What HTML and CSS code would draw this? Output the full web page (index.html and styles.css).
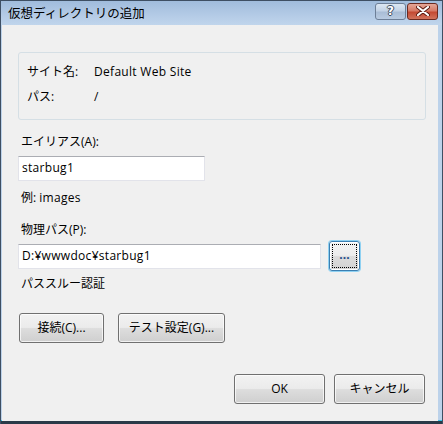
FILE: index.html
```html
<!DOCTYPE html>
<html lang="ja">
<head>
  <meta charset="UTF-8">
  <title>仮想ディレクトリの追加</title>
  <link rel="stylesheet" href="styles.css">
</head>
<body>
  <div class="window">
    <div class="titlebar">
      <span class="title">仮想ディレクトリの追加</span>
      <div class="caption-buttons">
        <div class="cap-btn help"><span>?</span></div>
        <div class="cap-btn close">
          <svg width="14" height="10" viewBox="0 0 14 10">
            <path d="M2 1 L12 9 M12 1 L2 9" stroke="#5a1a10" stroke-width="4" stroke-linecap="round"/>
            <path d="M2 1 L12 9 M12 1 L2 9" stroke="#ffffff" stroke-width="2.2" stroke-linecap="round"/>
          </svg>
        </div>
      </div>
    </div>

    <div class="client">
      <div class="group">
        <div class="info-row"><span class="info-label">サイト名:</span><span class="latin">Default Web Site</span></div>
        <div class="info-row"><span class="info-label">パス:</span><span>/</span></div>
      </div>

      <div class="label alias-label">エイリアス(A):</div>
      <div class="textbox alias-box latin">starbug1</div>
      <div class="label example">例: <span class="latin">images</span></div>

      <div class="label path-label">物理パス(P):</div>
      <div class="path-row">
        <div class="textbox path-box latin">D:¥wwwdoc¥starbug1</div>
        <div class="btn browse"><span class="focus-ring">...</span></div>
      </div>

      <div class="label passthru">パススルー認証</div>

      <div class="btn-row">
        <div class="btn connect">接続(C)...</div>
        <div class="btn test">テスト設定(G)...</div>
      </div>

      <div class="footer">
        <div class="btn ok">OK</div>
        <div class="btn cancel">キャンセル</div>
      </div>
    </div>
  </div>
</body>
</html>
```

FILE: styles.css
```css
html, body {
  margin: 0;
  padding: 0;
}

body {
  font-family: 'Open Sans', 'Noto Sans CJK JP', sans-serif;
  font-size: 12px;
  color: #000;
  background: #fff;
}

.latin {
  letter-spacing: 0.3px;
}

.window {
  width: 443px;
  height: 424px;
  box-sizing: border-box;
  border: 1px solid #3e4f63;
  border-bottom: none;
  background: #bcd2ea;
  display: flex;
  flex-direction: column;
  box-shadow: inset 0 -3px 0 #2a3a48, inset 0 -4px 0 #38c0e4;
}

.titlebar {
  height: 24px;
  flex-shrink: 0;
  display: flex;
  align-items: center;
  justify-content: space-between;
  background: linear-gradient(to bottom, #a0bcdc 0%, #b4cbe6 60%, #c0d5ec 100%);
}

.title {
  margin-left: 7px;
  margin-top: -1px;
  font-size: 12.5px;
  color: #000;
}

.caption-buttons {
  display: flex;
  gap: 1px;
  margin-right: 4px;
  margin-top: -4px;
}

.cap-btn {
  width: 31px;
  height: 17px;
  box-sizing: border-box;
  border: 1px solid #6d7f97;
  border-radius: 3px;
  display: flex;
  align-items: center;
  justify-content: center;
}

.help {
  background: linear-gradient(to bottom, #dce7f3 0%, #c3d3e6 45%, #a9bdd6 55%, #b9cbe1 100%);
}

.help span {
  font-family: 'DejaVu Sans', sans-serif;
  font-weight: bold;
  font-size: 12px;
  color: #fff;
  text-shadow: -1px 0 #3c4c60, 1px 0 #3c4c60, 0 -1px #3c4c60, 0 1px #3c4c60;
  line-height: 1;
}

.close {
  border-color: #6b2a20;
  background: linear-gradient(to bottom, #e5a798 0%, #d67a66 45%, #c44a33 55%, #d1735c 100%);
}

.client {
  flex: 1;
  margin: 0 4px 3px 1px;
  background: #f0f0f0;
  padding: 27px 0 0 16px;
  display: flex;
  flex-direction: column;
  align-items: flex-start;
}

.group {
  width: 408px;
  height: 68px;
  box-sizing: border-box;
  border: 1px solid #d5dfe5;
  border-radius: 3px;
  padding: 11px 0 0 8px;
  display: flex;
  flex-direction: column;
  gap: 9px;
}

.info-row {
  display: flex;
  line-height: 16px;
}

.info-label {
  width: 67px;
}

.label {
  line-height: 16px;
  margin-left: 3px;
}

.alias-label {
  margin-top: 14px;
}

.textbox {
  height: 25px;
  box-sizing: border-box;
  background: #fff;
  border: 1px solid #e2e3ea;
  border-top-color: #abadb3;
  padding-left: 3px;
  line-height: 22px;
}

.alias-box {
  width: 187px;
  margin-top: 6px;
}

.example {
  margin-top: 9px;
}

.path-label {
  margin-top: 16px;
}

.path-row {
  display: flex;
  align-items: center;
  margin-top: 3px;
  gap: 8px;
}

.path-box {
  width: 303px;
}

.btn {
  height: 30px;
  box-sizing: border-box;
  border: 1px solid #707070;
  border-radius: 3px;
  background: linear-gradient(to bottom, #f2f2f2 0%, #ebebeb 48%, #dddddd 52%, #cfcfcf 100%);
  box-shadow: inset 0 0 0 1px rgba(255, 255, 255, 0.7);
  display: flex;
  align-items: center;
  justify-content: center;
  line-height: 16px;
}

.browse {
  width: 31px;
  border: 1px solid #3c7fb1;
  box-shadow: 0 0 0 1px #8fd1f2, inset 0 0 0 1px #ffffff;
  background: linear-gradient(to bottom, #f4f4f4 0%, #ececec 48%, #dcdcdc 52%, #d2d2d2 100%);
  padding: 2px;
}

.focus-ring {
  width: 100%;
  height: 100%;
  box-sizing: border-box;
  border: 1px dotted #000;
  display: flex;
  align-items: center;
  justify-content: center;
  font-weight: bold;
  color: #1f4c8a;
  letter-spacing: 0;
  padding-bottom: 3px;
}

.passthru {
  margin-top: 5px;
}

.btn-row {
  display: flex;
  gap: 14px;
  margin-top: 21px;
  margin-left: 1px;
}

.connect {
  width: 85px;
}

.test {
  width: 107px;
}

.footer {
  display: flex;
  gap: 9px;
  width: 407px;
  justify-content: flex-end;
  margin-top: 31px;
}

.ok, .cancel {
  width: 91px;
}
```
